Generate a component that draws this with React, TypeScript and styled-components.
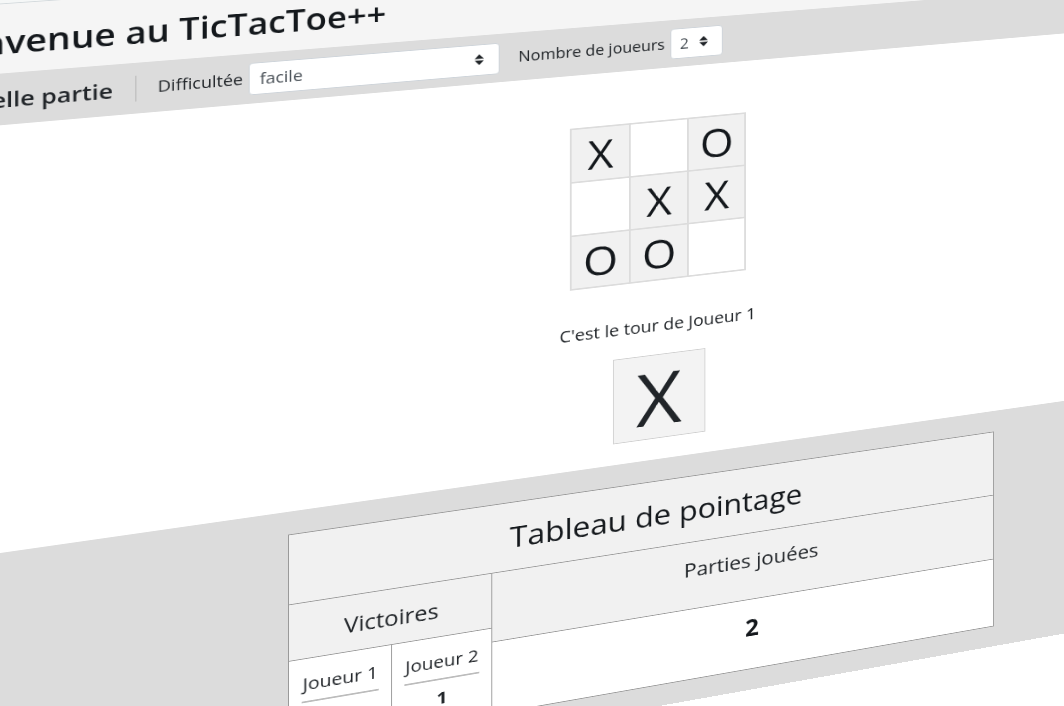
import React from 'react';
import styled, { createGlobalStyle } from 'styled-components';

const GlobalStyle = createGlobalStyle`
  *, *::before, *::after { box-sizing: border-box; }
  body {
    margin: 0;
    background: #fff;
    color: #212529;
    font-family: "Open Sans", "Noto Sans", sans-serif;
    font-size: 16px;
    line-height: 24px;
  }
`;

const Viewport = styled.div`
  height: 100vh;
  overflow: hidden;
  background: #fff;
`;

/* The whole page is a flat sheet seen in perspective. */
const Sheet = styled.div`
  width: 144vw;
  margin-left: -10vw;
  transform-origin: 50% 0;
  transform: matrix3d(0.88, -0.0673, 0, 0.0001276, 0, 0.8, 0, 0, 0, 0, 1, 0, -1, -54.8, 0, 1);
`;

const TopStrip = styled.div`
  height: 16px;
  background: #f5f7f7;
  border-bottom: 1px solid #d4dadd;
`;

const Header = styled.header`
  display: flex;
  align-items: center;
  height: 79px;
  padding: 8px 10px 0;
  background: #f5f5f5;
`;

const Title = styled.h1`
  margin: 0;
  font-size: 36px;
  line-height: 48px;
  font-weight: 600;
  color: #14181c;
  white-space: nowrap;
`;

const Toolbar = styled.nav`
  display: flex;
  align-items: center;
  height: 59px;
  padding: 0 13px;
  background: #dcdcdc;
  white-space: nowrap;
`;

const NewGame = styled.button`
  padding: 0;
  border: 0;
  background: none;
  color: #212529;
  font-family: inherit;
  font-size: 24px;
  line-height: 32px;
  font-weight: 600;
`;

const Separator = styled.span`
  width: 1px;
  height: 30px;
  margin: 0 21px 0 22px;
  background: #b8b8b8;
`;

const Field = styled.div`
  display: flex;
  align-items: center;
  gap: 6px;
  margin-right: 20px;
`;

const FieldLabel = styled.label`
  padding-bottom: 2px;
  font-size: 18px;
`;

const SelectBox = styled.div<{ $wide?: boolean }>`
  position: relative;
  width: ${(p) => (p.$wide ? '263px' : '60px')};
`;

const Select = styled.select`
  display: block;
  width: 100%;
  height: 38px;
  padding: 0 10px;
  appearance: none;
  border: 1px solid #ced4da;
  border-radius: 4px;
  background: #fff;
  color: #495057;
  font-family: inherit;
  font-size: 18px;
`;

const Caret = styled.svg`
  position: absolute;
  top: 12px;
  right: 17px;
  width: 10px;
  height: 13px;
  pointer-events: none;
`;

const Game = styled.main`
  display: flex;
  flex-direction: column;
  align-items: center;
  padding: 65px 0 26px;
  background: #fff;
`;

const Board = styled.div`
  display: grid;
  grid-template-columns: repeat(3, 64px);
  grid-auto-rows: 64px;
  gap: 2px;
  padding: 2px;
  background: #dcdcdc;
`;

const Cell = styled.button<{ $taken: boolean }>`
  padding: 0;
  border: 0;
  background: ${(p) => (p.$taken ? '#f1f1f1' : '#fff')};
  color: #14181c;
  font-family: inherit;
  font-size: 50px;
  line-height: 56px;
`;

const Turn = styled.p`
  margin: 42px 0 22px;
  font-size: 20px;
  line-height: 28px;
`;

const TurnMark = styled.div`
  display: flex;
  align-items: center;
  justify-content: center;
  width: 105px;
  height: 105px;
  border: 1px solid #d0d0d0;
  background: #f3f3f3;
  font-size: 90px;
`;

const Scores = styled.section`
  display: flex;
  justify-content: center;
  padding: 27px 0 26px;
  background: #dcdcdc;
`;

const ScoreTable = styled.table`
  width: 800px;
  table-layout: fixed;
  border-collapse: collapse;
  background: #fff;
  text-align: center;

  th, td {
    padding: 0;
    border: 1px solid #9a9a9a;
    font-weight: 400;
  }
`;

const PlayerCol = styled.col`
  width: 107px;
`;

const Row = styled.tr<{ $height: number }>`
  height: ${(p) => p.$height}px;
`;

const TitleCell = styled.th`
  background: #f1f1f1;
  color: #14181c;
  font-size: 35px;
  line-height: 48px;

  && { padding-top: 2px; }
`;

const HeadCell = styled.th<{ $top?: boolean }>`
  background: #f1f1f1;
  font-size: ${(p) => (p.$top ? '24px' : '25px')};
  line-height: 32px;
  vertical-align: ${(p) => (p.$top ? 'top' : 'middle')};

  && { padding: ${(p) => (p.$top ? '18px 0 0' : '2px 0 0')}; }
`;

const PlayerCell = styled.td`
  height: 105px;
  vertical-align: top;

  && { padding: 16px 13px 0; }
`;

const PlayerName = styled.div`
  padding-bottom: 6px;
  border-bottom: 2px solid #bcbcbc;
  font-size: 20px;
  line-height: 28px;
  white-space: nowrap;
`;

const Count = styled.strong`
  display: block;
  padding-top: 8px;
  font-size: 20px;
  line-height: 28px;
  font-weight: 700;
`;

const Total = styled.td`
  vertical-align: top;
  color: #14181c;
  font-size: 28px;
  line-height: 32px;

  && { padding-top: 19px; font-weight: 700; }
`;

const Carets = () => (
  <Caret viewBox="0 0 10 13" aria-hidden="true">
    <path d="M5 0 10 5.4H0zM5 13 0 7.6h10z" fill="#212529" />
  </Caret>
);

const board = ['X', '', 'O', '', 'X', 'X', 'O', 'O', ''];

export default function App() {
  return (
    <>
      <GlobalStyle />
      <Viewport>
        <Sheet>
          <TopStrip />
          <Header>
            <Title>Bienvenue au TicTacToe++</Title>
          </Header>
          <Toolbar>
            <NewGame type="button">Nouvelle partie</NewGame>
            <Separator />
            <Field>
              <FieldLabel htmlFor="difficulty">Difficultée</FieldLabel>
              <SelectBox $wide>
                <Select id="difficulty" defaultValue="facile">
                  <option>facile</option>
                  <option>difficile</option>
                </Select>
                <Carets />
              </SelectBox>
            </Field>
            <Field>
              <FieldLabel htmlFor="players">Nombre de joueurs</FieldLabel>
              <SelectBox>
                <Select id="players" defaultValue="2">
                  <option>1</option>
                  <option>2</option>
                </Select>
                <Carets />
              </SelectBox>
            </Field>
          </Toolbar>
          <Game>
            <Board>
              {board.map((mark, i) => (
                <Cell key={i} type="button" $taken={mark !== ''} aria-label={`Case ${i + 1}`}>
                  {mark}
                </Cell>
              ))}
            </Board>
            <Turn>C'est le tour de Joueur 1</Turn>
            <TurnMark>X</TurnMark>
          </Game>
          <Scores>
            <ScoreTable>
              <colgroup>
                <PlayerCol />
                <PlayerCol />
                <col />
              </colgroup>
              <tbody>
                <Row $height={83}>
                  <TitleCell colSpan={3}>Tableau de pointage</TitleCell>
                </Row>
                <Row $height={67}>
                  <HeadCell colSpan={2}>Victoires</HeadCell>
                  <HeadCell rowSpan={2} $top>Parties jouées</HeadCell>
                </Row>
                <Row $height={17}>
                  <PlayerCell rowSpan={2}>
                    <PlayerName>Joueur 1</PlayerName>
                    <Count>0</Count>
                  </PlayerCell>
                  <PlayerCell rowSpan={2}>
                    <PlayerName>Joueur 2</PlayerName>
                    <Count>1</Count>
                  </PlayerCell>
                </Row>
                <Row $height={88}>
                  <Total>2</Total>
                </Row>
              </tbody>
            </ScoreTable>
          </Scores>
        </Sheet>
      </Viewport>
    </>
  );
}
